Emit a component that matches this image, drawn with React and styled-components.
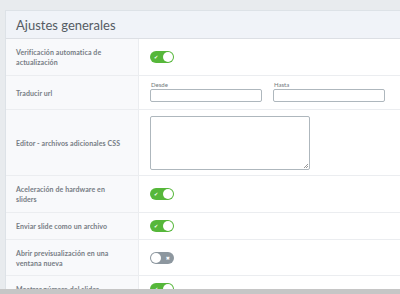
import React from 'react';
import styled, { createGlobalStyle } from 'styled-components';

const GlobalStyle = createGlobalStyle`
    html, body {
        margin:0;
        padding:0;
        background:#e8ebee;
        overflow:hidden;
    }
    body {
        font-family: Lato, 'Open Sans', sans-serif;
    }
`

const Toggle = ({on}) => (
    <Switch $on={on}>
        <Mark $on={on}>{on ? '✔' : '✖'}</Mark>
        <Knob $on={on}/>
    </Switch>
)

const rows = [
    {label: 'Verificación automatica de actualización', h: 37, kind: 'on'},
    {label: 'Traducir url', h: 34, kind: 'range'},
    {label: 'Editor - archivos adicionales CSS', h: 66, kind: 'area'},
    {label: 'Aceleración de hardware en sliders', h: 37, kind: 'on'},
    {label: 'Enviar slide como un archivo', h: 27, kind: 'on'},
    {label: 'Abrir previsualización en una ventana nueva', h: 36, kind: 'off'},
    {label: 'Mostrar número del slider', h: 27, kind: 'on'},
]

const App = () => {
    return (
        <Page>
            <GlobalStyle/>
            <Main>
                <Card>
                    <Header>Ajustes generales</Header>
                    {rows.map((r, i) => (
                        <Row key={i} $h={r.h}>
                            <Label $wide={r.kind === 'area'}>{r.label}</Label>
                            <Field>
                                {r.kind === 'on' && <Toggle on/>}
                                {r.kind === 'off' && <Toggle/>}
                                {r.kind === 'range' && (
                                    <Range>
                                        <InputGroup>
                                            <Small>Desde</Small>
                                            <Input/>
                                        </InputGroup>
                                        <InputGroup>
                                            <Small>Hasta</Small>
                                            <Input/>
                                        </InputGroup>
                                    </Range>
                                )}
                                {r.kind === 'area' && <Area/>}
                            </Field>
                        </Row>
                    ))}
                </Card>
            </Main>
            <BottomBar/>
        </Page>
    )
}

const Page = styled.div`
    height:294px;
    display:flex;
    flex-direction:column;
`
const Main = styled.div`
    flex:1;
    overflow:hidden;
    padding:10px 0 0 5px;
`
const BottomBar = styled.div`
    height:5px;
    background:#c6c6c6;
`
const Card = styled.div`
    width:440px;
    background:#fff;
    border-left:1px solid #dde2e7;
    border-top:1px solid #dde2e7;
`
const Header = styled.div`
    height:28px;
    box-sizing:border-box;
    background:#f0f3f8;
    border-bottom:1px solid #dcdfe4;
    padding:4px 0 0 10px;
    color:#555b63;
    font-size:13px;
    line-height:20px;
`
const Row = styled.div`
    display:grid;
    grid-template-columns:133px 1fr;
    height:${p => p.$h}px;
    box-sizing:border-box;
    border-bottom:1px solid #ebedf0;
`
const Label = styled.div`
    background:#f8f9fb;
    border-right:1px solid #ebedf0;
    padding:0 ${p => p.$wide ? '2px' : '18px'} 0 10px;
    display:flex;
    align-items:center;
    color:#767c84;
    font-size:7px;
    font-weight:700;
    line-height:10px;
    letter-spacing:0.1px;
    white-space:${p => p.$wide ? 'nowrap' : 'normal'};
`
const Field = styled.div`
    display:flex;
    align-items:center;
    padding-left:11px;
`
const Switch = styled.div`
    position:relative;
    width:24px;
    height:12px;
    border-radius:7px;
    background:${p => p.$on ? '#56b73a' : '#8d979f'};
    display:flex;
    align-items:center;
    justify-content:${p => p.$on ? 'flex-end' : 'flex-start'};
    padding:0 1px;
    box-sizing:border-box;
`
const Knob = styled.div`
    width:10px;
    height:10px;
    border-radius:50%;
    background:#fff;
`
const Mark = styled.span`
    position:absolute;
    top:0;
    ${p => p.$on ? 'left:4px;' : 'right:4px;'}
    color:#fff;
    font-family:'DejaVu Sans', sans-serif;
    font-size:5px;
    line-height:12px;
`
const Range = styled.div`
    display:flex;
    gap:11px;
    margin-top:-2px;
`
const InputGroup = styled.div`
    display:flex;
    flex-direction:column;
`
const Small = styled.span`
    color:#70767d;
    font-size:6px;
    line-height:7px;
    padding-left:1px;
    margin-bottom:1px;
`
const Input = styled.div`
    width:110px;
    height:11px;
    border:1.5px solid #aeb7bd;
    border-radius:2px;
    background:#fff;
`
const Area = styled.div`
    position:relative;
    width:158px;
    height:52px;
    border:1.5px solid #aeb7bd;
    border-radius:2px;
    &:after{
        content:'';
        position:absolute;
        right:1px;
        bottom:1px;
        width:4px;
        height:4px;
        background:linear-gradient(135deg, transparent 45%, #999 45%, #999 55%, transparent 55%, transparent 70%, #999 70%, #999 80%, transparent 80%);
    }
`

export default App
